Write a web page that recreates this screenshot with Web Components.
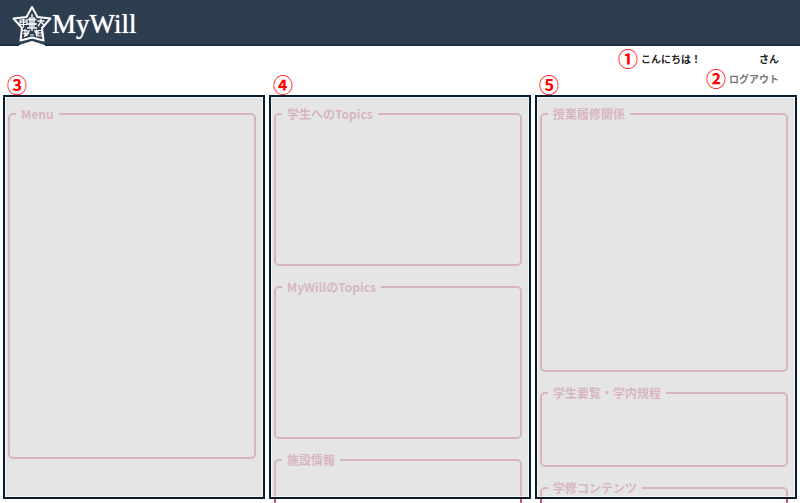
<!DOCTYPE html>
<html lang="ja">
<head>
<meta charset="utf-8">
<meta name="viewport" content="width=device-width, initial-scale=1">
<title>MyWill</title>
<style>
  :root {
    --color-header: #2d3e50;
    --color-frame: #071c2c;
    --color-group: #cc5078;
    --color-marker: #ff0000;
  }
  body {
    margin: 0;
    background: #fff;
    font-family: "Noto Sans CJK JP", "Noto Sans", sans-serif;
  }
</style>
</head>
<body>
<portal-app></portal-app>

<script>
const createTemplate = (html) => {
  const template = document.createElement('template');
  template.innerHTML = html;
  return template;
};

const define = (name, template) => {
  customElements.define(name, class extends HTMLElement {
    constructor() {
      super();
      this.attachShadow({ mode: 'open' });
      this.shadowRoot.appendChild(template.content.cloneNode(true));
    }
  });
};

// Numbered marker used by the guide
define('guide-marker', createTemplate(`
  <style>
    :host {
      display: block;
      color: var(--color-marker);
      font-size: 20px;
      font-weight: 700;
      line-height: 20px;
    }
  </style>
  <slot></slot>
`));

define('portal-header', createTemplate(`
  <style>
    :host {
      display: block;
      background: var(--color-header);
      box-shadow: inset 0 -2px #1b2e42;
    }
    .brand {
      display: flex;
      height: 46px;
      padding-left: 12px;
      color: #fff;
      text-decoration: none;
    }
    svg {
      width: 40px;
      height: 46px;
    }
    .name {
      font: 27px/48px "Liberation Serif", serif;
      text-shadow: 0 0 1px #fff;
    }
  </style>
  <a class="brand" href="#">
    <svg viewBox="0 0 40 46" fill="none" stroke="#fff" aria-hidden="true">
      <path d="M7 46v-1l13-4 13 4v1z" fill="#fff" stroke="none"/>
      <path d="M20 7l5.500 10 13 1.500-8.500 9.500 1.500 12.500-11.500-3-11.500 3 1.500-12.500L1.500 18.500l13-1.500z" stroke-width="2" stroke-linejoin="round"/>
      <path d="M8 20h7v4.500H8zM11.500 18.500v9M8 22.200h7" stroke-width="1.200"/>
      <path d="M15.500 19.500h9M15 24h10M18 17v10M22 17v10M20 14v17M15 28h10M17.500 30l-2 4M22.500 30l2 4" stroke-width="1.400"/>
      <path d="M25.500 21h7M29 18.500v3l-3 5M29 22l4 4" stroke-width="1.400"/>
      <path d="M10.500 30.500h5M13 29v8M11 33.500h5l-4 3M15 30v6M24.500 29.500v7M23 32h3M26 30.500h4v5.500h-4zM26 33h4M18 35h4" stroke-width="1.200"/>
    </svg>
    <span class="name">MyWill</span>
  </a>
`));

define('user-bar', createTemplate(`
  <style>
    :host {
      display: flex;
      flex-direction: column;
      align-items: flex-end;
      box-sizing: border-box;
      height: 49px;
      padding: 3px 21px 0;
      font-size: 10px;
      font-weight: 700;
      line-height: 20px;
    }
    .row {
      display: flex;
      gap: 3px;
      color: #222;
    }
    .user {
      width: 52px;
    }
    a {
      color: #777;
      text-decoration: none;
    }
  </style>
  <div class="row">
    <guide-marker>①</guide-marker>
    <span>こんにちは！</span>
    <span class="user"><slot></slot></span>
    <span>さん</span>
  </div>
  <div class="row">
    <guide-marker>②</guide-marker>
    <a href="#">ログアウト</a>
  </div>
`));

// Translucent frame over a column of groups; the groups may run past it
define('portal-column', createTemplate(`
  <style>
    :host {
      display: flex;
      flex-direction: column;
      gap: 12px;
      box-sizing: border-box;
      min-width: 0;
      min-height: 0;
      padding: 10px 9px 0 5px;
      position: relative;
    }
    .frame {
      position: absolute;
      inset: 0;
      border: 2px solid var(--color-frame);
      background: rgba(219, 219, 219, 0.73);
      background-clip: padding-box;
      box-shadow: inset 0 0 0 1px rgba(255, 255, 255, 0.6);
      pointer-events: none;
    }
    .marker {
      position: absolute;
      top: -20px;
      left: 4px;
    }
  </style>
  <slot></slot>
  <div class="frame"></div>
  <div class="marker"><slot name="marker"></slot></div>
`));

define('portal-group', createTemplate(`
  <style>
    :host {
      display: block;
      flex: none;
    }
    fieldset {
      margin: 0;
      padding: 0 6px;
      border: 2px solid var(--color-group);
      border-radius: 5px;
    }
    legend {
      padding: 0 5px;
      color: var(--color-group);
      font-size: 12px;
      font-weight: 700;
      line-height: 18px;
    }
    .body {
      min-height: var(--group-height, 141px);
    }
  </style>
  <fieldset>
    <legend><slot name="title"></slot></legend>
    <div class="body"><slot></slot></div>
  </fieldset>
`));

define('portal-app', createTemplate(`
  <style>
    :host {
      display: flex;
      flex-direction: column;
      height: 100vh;
      overflow: hidden;
    }
    main {
      flex: 1;
      display: grid;
      grid-template-columns: repeat(3, minmax(0, 1fr));
      grid-template-rows: minmax(0, 1fr);
      gap: 4px;
      min-height: 0;
      padding: 0 3px 4px;
    }
    .menu { --group-height: 334px; }
    .classes { --group-height: 247px; }
    .rules { --group-height: 63px; }
  </style>
  <portal-header></portal-header>
  <user-bar></user-bar>
  <main>
    <portal-column>
      <guide-marker slot="marker">③</guide-marker>
      <portal-group class="menu"><span slot="title">Menu</span></portal-group>
    </portal-column>
    <portal-column>
      <guide-marker slot="marker">④</guide-marker>
      <portal-group><span slot="title">学生へのTopics</span></portal-group>
      <portal-group><span slot="title">MyWillのTopics</span></portal-group>
      <portal-group><span slot="title">施設情報</span></portal-group>
    </portal-column>
    <portal-column>
      <guide-marker slot="marker">⑤</guide-marker>
      <portal-group class="classes"><span slot="title">授業履修関係</span></portal-group>
      <portal-group class="rules"><span slot="title">学生要覧・学内規程</span></portal-group>
      <portal-group><span slot="title">学修コンテンツ</span></portal-group>
    </portal-column>
  </main>
`));
</script>
</body>
</html>
